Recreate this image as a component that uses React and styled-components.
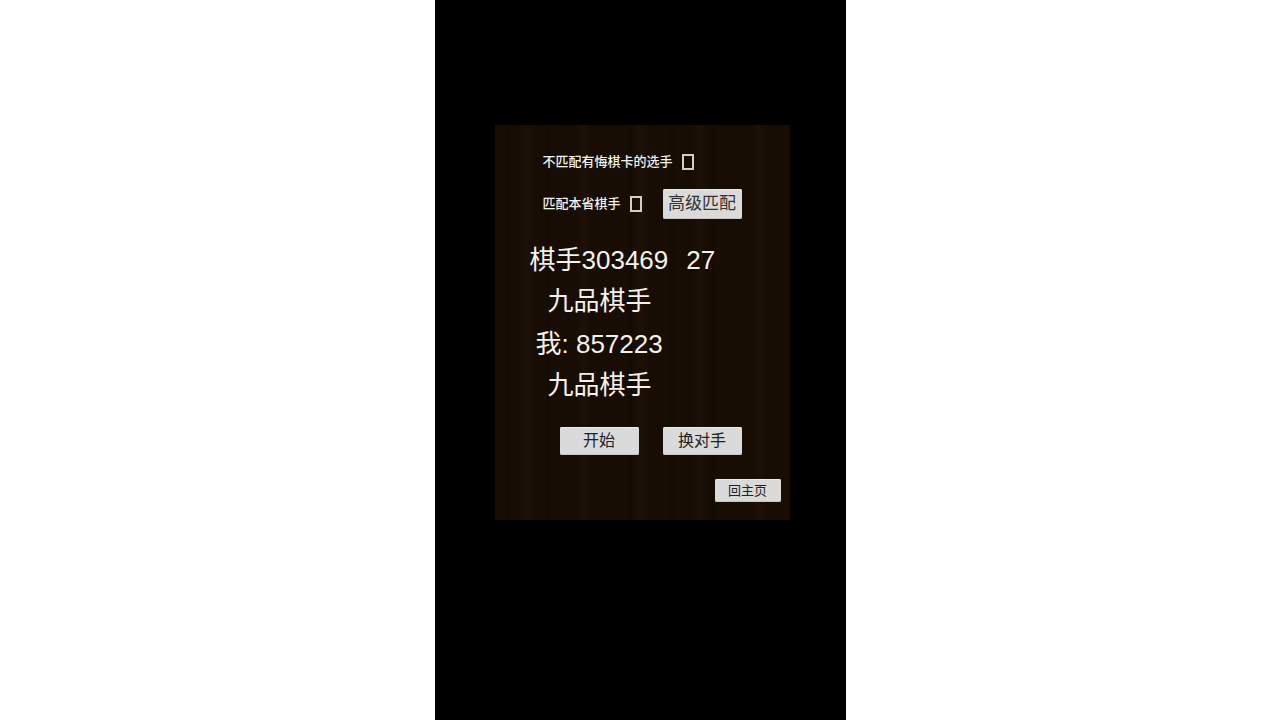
import React from 'react';
import styled, { createGlobalStyle } from 'styled-components';

const GlobalStyle = createGlobalStyle`
  *, *::before, *::after { box-sizing: border-box; }
  body {
    margin: 0;
    background: #fff;
    font-family: "Liberation Sans", "Noto Sans CJK SC", sans-serif;
  }
`;

const Page = styled.div`
  display: flex;
  justify-content: center;
  min-height: 100vh;
`;

const Screen = styled.main`
  width: 100%;
  max-width: 411px;
  padding: 125px 56px 24px 60px;
  background: #000;
`;

const Panel = styled.section`
  display: flex;
  flex-direction: column;
  padding: 24px 9px 18px 35px;
  color: #f3f1ee;
  background:
    repeating-linear-gradient(90deg, transparent 0 23px, rgba(70, 45, 25, 0.13) 31px, transparent 39px 58px),
    repeating-linear-gradient(90deg, transparent 0 9px, rgba(0, 0, 0, 0.15) 13px, transparent 17px 41px),
    #170d04;
`;

const Options = styled.form`
  display: flex;
  flex-direction: column;
  gap: 14px;
  padding: 0 39px 0 13px;
  margin-bottom: 21px;
`;

const OptionRow = styled.div`
  display: flex;
  align-items: center;
  justify-content: space-between;
  min-height: 26px;
`;

const Option = styled.label`
  display: flex;
  align-items: center;
  gap: 9px;
  font-size: 13px;
  font-weight: 500;
  line-height: 26px;
  white-space: nowrap;
`;

const Tick = styled.input`
  appearance: none;
  width: 12px;
  height: 16px;
  margin: 0;
  border: 2px solid #d2cec9;
  &:checked { background: #d2cec9; }
`;

const Player = styled.div`
  margin-bottom: 2px;
  font-size: 26px;
  line-height: 41px;
  white-space: nowrap;
`;

const Name = styled.div`
  display: flex;
  gap: 18px;
  padding-left: ${(p) => (p.$self ? '6px' : '0')};
`;

const Rank = styled.div`
  padding-left: 18px;
`;

const Button = styled.button`
  flex: none;
  width: ${(p) => (p.$small ? '66px' : '79px')};
  height: ${(p) => (p.$small ? '23px' : p.$tall ? '30px' : '28px')};
  padding: 0;
  border: 0;
  border-radius: 2px;
  background: #dadada;
  box-shadow: inset 0 1px #ececec, inset 0 -1px #c6c6c6;
  color: ${(p) => (p.$tall ? '#333' : '#222')};
  font-family: inherit;
  font-size: ${(p) => (p.$small ? '13px' : p.$tall ? '17px' : '16px')};
  line-height: 20px;
  white-space: nowrap;
`;

const Actions = styled.div`
  display: flex;
  justify-content: space-between;
  padding: 0 39px 0 30px;
  margin: 19px 0 24px;
`;

const Footer = styled.div`
  display: flex;
  justify-content: flex-end;
`;

export default function App() {
  return (
    <Page>
      <GlobalStyle />
      <Screen>
        <Panel>
          <Options>
            <OptionRow>
              <Option>
                不匹配有悔棋卡的选手
                <Tick type="checkbox" />
              </Option>
            </OptionRow>
            <OptionRow>
              <Option>
                匹配本省棋手
                <Tick type="checkbox" />
              </Option>
              <Button type="button" $tall>高级匹配</Button>
            </OptionRow>
          </Options>
          <Player>
            <Name><span>棋手303469</span><span>27</span></Name>
            <Rank>九品棋手</Rank>
          </Player>
          <Player>
            <Name $self>我: 857223</Name>
            <Rank>九品棋手</Rank>
          </Player>
          <Actions>
            <Button type="button">开始</Button>
            <Button type="button">换对手</Button>
          </Actions>
          <Footer>
            <Button type="button" $small>回主页</Button>
          </Footer>
        </Panel>
      </Screen>
    </Page>
  );
}
